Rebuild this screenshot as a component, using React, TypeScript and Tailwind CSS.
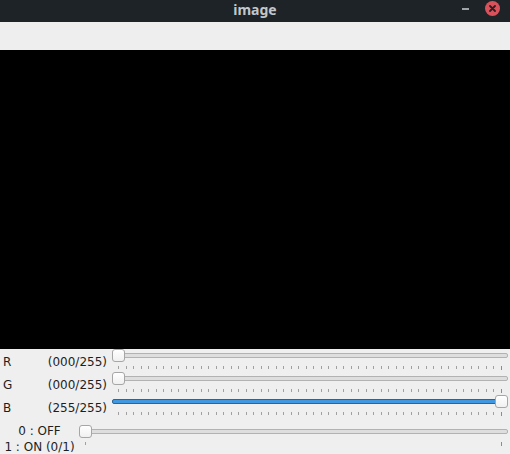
const font = { fontFamily: '"DejaVu Sans", "Liberation Sans", sans-serif' };

function Ticks({ count }: { count: number }) {
  const items = [];
  for (let i = 0; i < count; i++) {
    const last = i === count - 1;
    items.push(
      <div
        key={i}
        className={last ? "w-px h-[4px] bg-[#8c8c8c]" : "w-px h-[3px] bg-[#a0a0a0]"}
      />
    );
  }
  return <div className="flex justify-between items-start px-[6px]">{items}</div>;
}

function Slider({ value, max, ticks, blue }: { value: number; max: number; ticks: number; blue?: boolean }) {
  const pct = value / max;
  return (
    <div className="relative flex-1 h-[23px]">
      <div className="pt-[4px] pb-[8px]">
        {blue ? (
          <div className="h-[5px] rounded-[2px] border border-[#2c6594] bg-[#3f98e0]" />
        ) : (
          <div className="h-[5px] rounded-[2px] border border-[#b2b2b2] bg-[#dedede]" />
        )}
      </div>
      <Ticks count={ticks} />
      <div
        className="absolute top-[0px] w-[13px] h-[13px] rounded-[3px] border border-[#a6a6a6] bg-gradient-to-b from-white to-[#f0f0f0]"
        style={{ left: `calc(${pct * 100}% - ${pct * 13}px)` }}
      />
    </div>
  );
}

function Row({ name, value }: { name: string; value: number }) {
  const v = String(value).padStart(3, "0");
  return (
    <div className="flex h-[23px] items-start">
      <div className="w-[112px] flex justify-between pl-[3px] pr-[5px] pt-[6px] text-[12px] leading-[15px] text-[#1e1e1e]">
        <span>{name}</span>
        <span>({v}/255)</span>
      </div>
      <Slider value={value} max={255} ticks={52} blue={value > 0} />
      <div className="w-[2px]" />
    </div>
  );
}

export default function App() {
  return (
    <div className="w-[510px] h-[454px] flex flex-col bg-[#efefef] overflow-hidden" style={font}>
      <div className="h-[22px] bg-[#1d2326] flex items-center relative">
        <div
          className="flex-1 text-center text-[14px] font-bold text-[#c3c7c9] leading-[22px] -mt-[3px]"
          style={{ fontFamily: '"Noto Sans", "DejaVu Sans", sans-serif' }}
        >
          image
        </div>
        <div className="absolute left-[462px] top-[8px] w-[7px] h-[2px] bg-[#9fa4a6]" />
        <div className="absolute left-[485px] top-[1px] w-[15px] h-[15px] rounded-full bg-[#d9525b] flex items-center justify-center">
          <svg width="7" height="7" viewBox="0 0 7 7">
            <path d="M1 1L6 6M6 1L1 6" stroke="#2a1f22" strokeWidth="1.8" strokeLinecap="round" />
          </svg>
        </div>
      </div>
      <div className="h-[28px] bg-[#eeeeee]" />
      <div className="h-[299px] bg-black" />
      <div>
        <Row name="R" value={0} />
        <Row name="G" value={0} />
        <Row name="B" value={255} />
        <div className="flex h-[36px] items-start">
          <div className="w-[79px] pt-[5px] text-center text-[12px] leading-[16px] text-[#1e1e1e]">
            <div>0 : OFF</div>
            <div>1 : ON (0/1)</div>
          </div>
          <div className="flex-1 pt-[7px] flex">
            <Slider value={0} max={1} ticks={2} />
          </div>
          <div className="w-[2px]" />
        </div>
      </div>
    </div>
  );
}
